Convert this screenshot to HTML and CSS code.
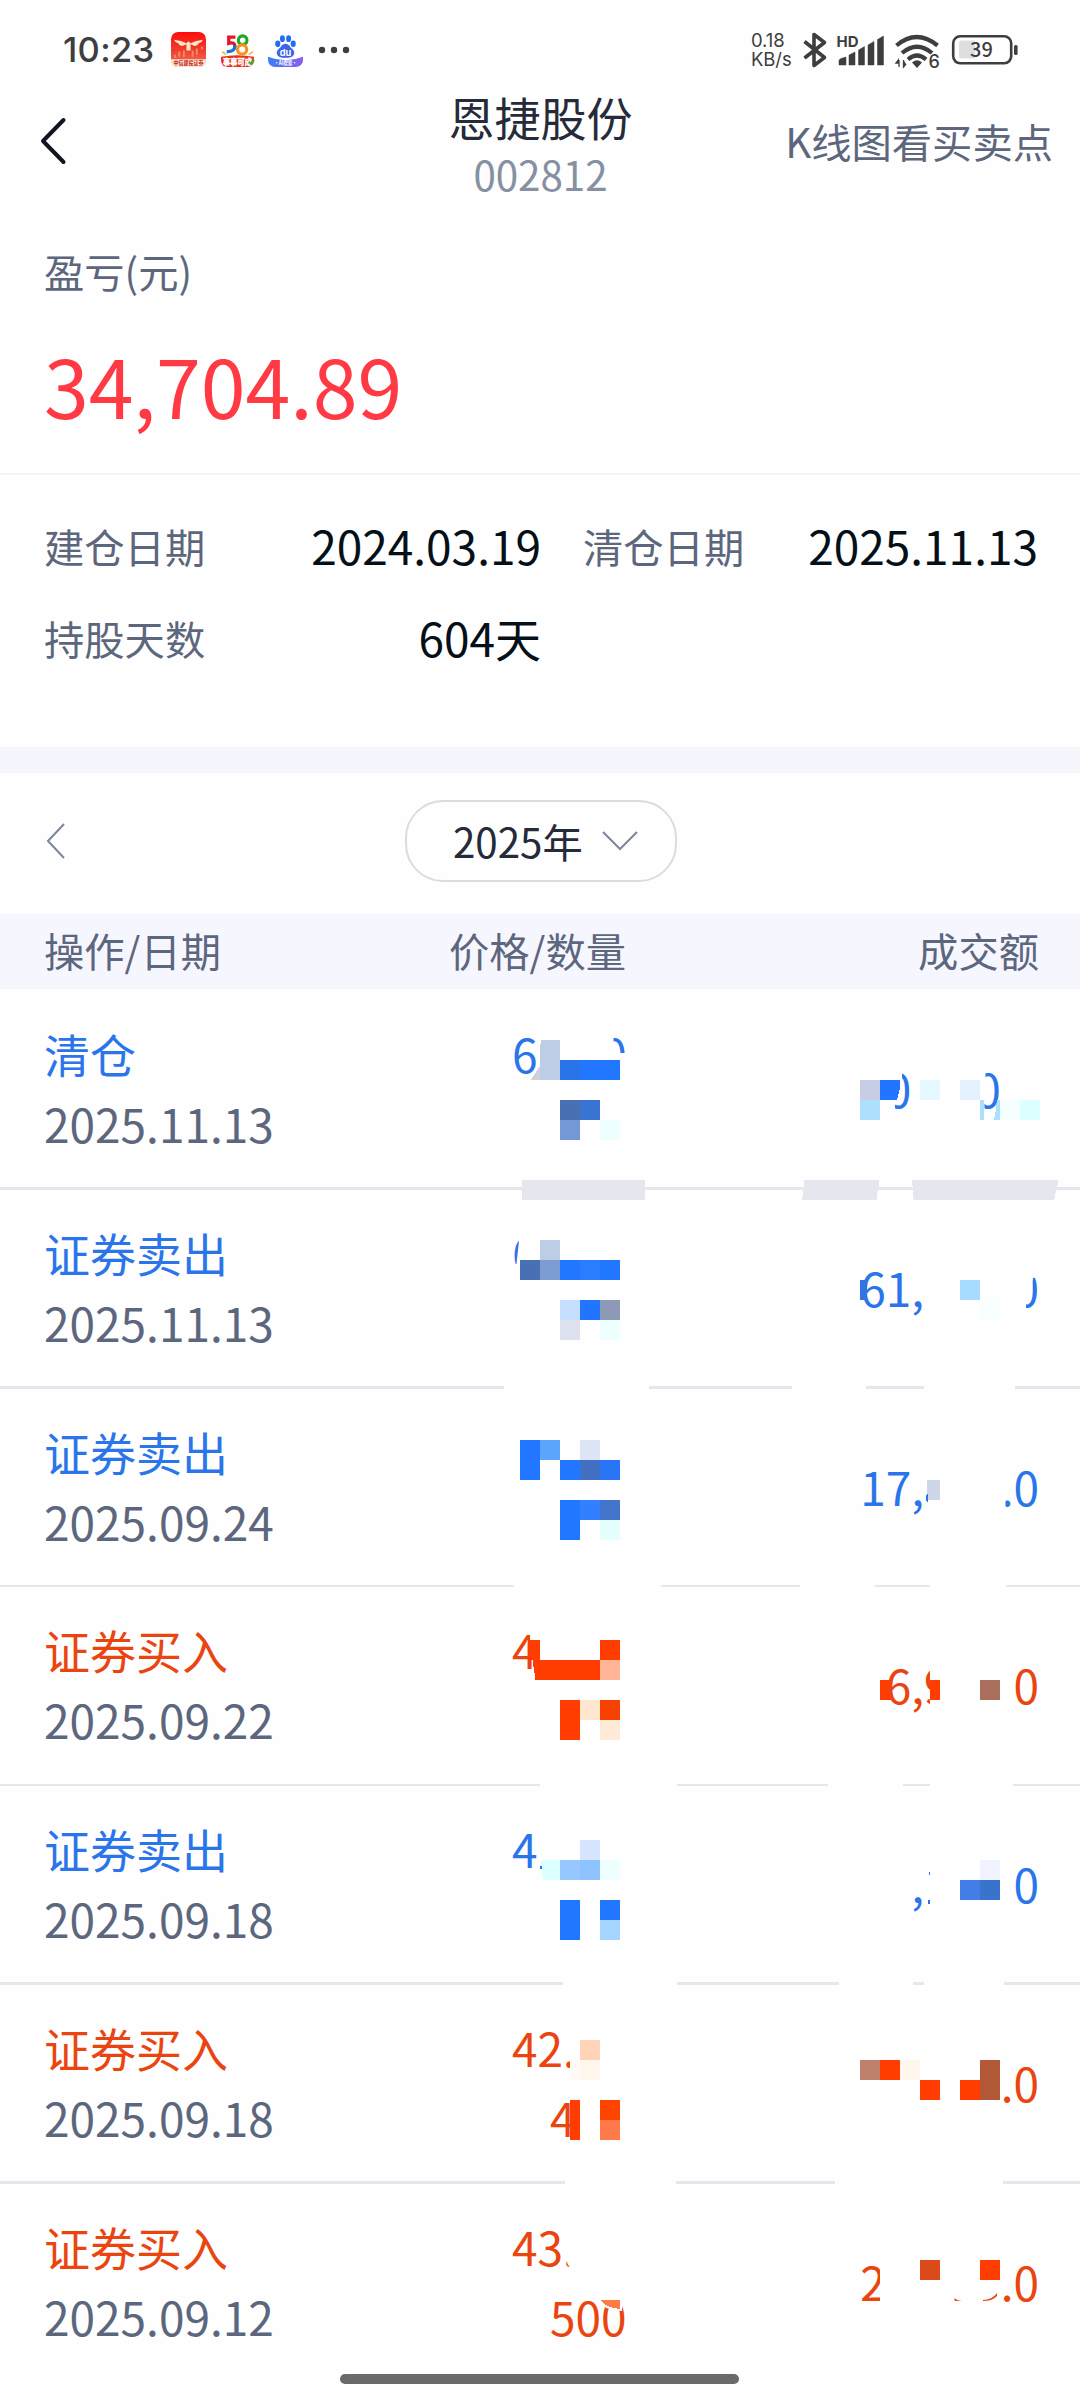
FILE: index.html
```html
<!DOCTYPE html>
<html lang="zh-CN">
<head>
<meta charset="utf-8">
<title>恩捷股份 002812</title>
<link rel="stylesheet" href="styles.css">
</head>
<body>
<div class="screen">
  <div class="status">
    <span class="clock">10:23</span>
    <svg class="app" viewBox="0 0 34 34">
      <defs><linearGradient id="red" x1="0" y1="0" x2="0" y2="1"><stop offset="0" stop-color="#fb0d0d"/><stop offset=".55" stop-color="#ee4130"/><stop offset="1" stop-color="#f07a5c"/></linearGradient></defs>
      <rect width="34" height="34" rx="7" fill="url(#red)"/>
      <path d="M0 26.500h34v1.500a6 6 0 0 1-6 6H6a6 6 0 0 1-6-6z" fill="#fbe3cf"/>
      <path d="M3 7.500q7 .5 12 3.500l2-2 2 2q5-3 12-3.500-1 3-4 3.500-1 2.500-4 2.500l-4-1.500v6h-4v-6l-4 1.500q-3 0-4-2.500-3-.5-4-3.500z" fill="#ffe7c2"/>
      <path d="M4 22v3M8 19v5M12.500 18v6M21 18v6M25 16v6M30 14v3" stroke="#f58a6c" stroke-width="1.800"/>
      <text x="17" y="32" class="app-text" fill="#c3271b" textLength="29" lengthAdjust="spacingAndGlyphs">中信建投证券</text>
    </svg>
    <svg class="app" viewBox="0 0 34 34">
      <path d="M1 24q16-3 32 0v4a6 6 0 0 1-6 6H7a6 6 0 0 1-6-6z" fill="#e8321a"/>
      <path d="M15 5H8.500v6q6-1.500 6 3" fill="none" stroke="#e5162b" stroke-width="3.200"/>
      <path d="M14.500 13q0 6.500-8 6" fill="none" stroke="#1476d8" stroke-width="3.200"/>
      <circle cx="22" cy="8" r="4.200" fill="none" stroke="#22a626" stroke-width="3"/>
      <circle cx="21.500" cy="17" r="4.500" fill="none" stroke="#f5921b" stroke-width="3"/>
      <path d="M2 19l4 3M32 19l-4 3" stroke="#f6b63c" stroke-width="1.500"/>
      <text x="17" y="32" class="app-text big" fill="#fff" stroke="#fff" stroke-width=".4" textLength="28" lengthAdjust="spacingAndGlyphs">事事可成</text>
      <path d="M28 29l2 2 3-4" fill="none" stroke="#3fa535" stroke-width="2"/>
    </svg>
    <svg class="app" viewBox="0 0 34 34">
      <defs><linearGradient id="blue"><stop offset="0" stop-color="#3c7ef5"/><stop offset="1" stop-color="#8a5cf0"/></linearGradient></defs>
      <path d="M0 24q17 7 34 0v3a7 7 0 0 1-7 7H7a7 7 0 0 1-7-7z" fill="url(#blue)"/>
      <g fill="#1f6df2"><ellipse cx="9.500" cy="11.500" rx="2.500" ry="3.200"/><ellipse cx="14" cy="6.500" rx="2.400" ry="3.300"/><ellipse cx="20" cy="6.500" rx="2.400" ry="3.300"/><ellipse cx="24.500" cy="11.500" rx="2.500" ry="3.200"/></g>
      <path d="M17 11.500q3 0 5 3.500 4 3 3.500 6-1 4-5.500 4h-6q-4.500 0-5.500-4-.5-3 3.500-6 2-3.500 5-3.500z" fill="#3f63e8"/>
      <text x="17" y="23" class="app-text du" fill="#fff">du</text>
      <text x="17" y="32" class="app-text" fill="#fff" textLength="22" lengthAdjust="spacingAndGlyphs">·AI搜索·</text>
    </svg>
    <svg class="dots" viewBox="0 0 32 8"><g fill="#3e3e3e"><circle cx="4" cy="4" r="3.200"/><circle cx="16" cy="4" r="3.200"/><circle cx="28" cy="4" r="3.200"/></g></svg>
    <span class="speed">0.18<br>KB/s</span>
    <svg class="phone" viewBox="800 28 222 44">
      <path d="M804.500 41.500l20 16L814 65.500v-31l10.500 8L804.500 58" fill="none" stroke="#3e3e3e" stroke-width="3.600" stroke-linejoin="round"/>
      <text x="836.500" y="46.500" class="hd" textLength="22" lengthAdjust="spacingAndGlyphs">HD</text>
      <path d="M839 60l2-1.500 5-1.500v8h-7zM849 55l6-3v13h-6zM858.500 50l6-3.500V65h-6zM868 45l6-3.500V65h-6zM877.500 39.500l6-3.500v29h-6z" fill="#3e3e3e" stroke="#3e3e3e" stroke-width=".5"/>
      <g fill="none" stroke="#3e3e3e" stroke-width="4.200"><path d="M896.500 45.500q20-17 41 0"/><path d="M902 53q15-12.500 30 0"/><path d="M908 59.500q9-8 18 0"/></g>
      <path d="M913 62.500q4-3 8 0l-4 4.500zM898 60.500l-2 2.500h2.300v-3zM899 67v-7M903.500 60v7l2.500-3" fill="#3e3e3e" stroke="#3e3e3e" stroke-width="1.300"/>
      <text x="928.500" y="68" class="six">6</text>
      <rect x="953.200" y="36.300" width="58" height="27" rx="7" fill="none" stroke="#3e3e3e" stroke-width="2.600"/>
      <path d="M962 40.500h13v18h-13q-3 0-3-3v-12q0-3 3-3z" fill="#dedede"/>
      <rect x="1014" y="45" width="3.600" height="10" rx="1.500" fill="#3e3e3e"/>
      <text x="981.500" y="57" class="level">39</text>
    </svg>
  </div>

  <header class="nav">
    <svg class="back" viewBox="0 0 28 50"><path d="M24.500 4L4 25l20.500 21" fill="none" stroke="#10161f" stroke-width="4" stroke-linecap="round" stroke-linejoin="round"/></svg>
    <div class="heading"><h1>恩捷股份</h1><p>002812</p></div>
    <a class="kline">K线图看买卖点</a>
  </header>

  <section class="profit">
    <p class="label">盈亏(元)</p>
    <p class="total">34,704.89</p>
  </section>

  <dl class="facts">
    <div><dt>建仓日期</dt><dd>2024.03.19</dd></div>
    <div><dt>清仓日期</dt><dd>2025.11.13</dd></div>
    <div><dt>持股天数</dt><dd>604天</dd></div>
  </dl>

  <div class="year-bar">
    <svg class="prev" viewBox="0 0 20 38"><path d="M18 2L2 19l16 17" fill="none" stroke="#7c859b" stroke-width="2"/></svg>
    <button class="year">2025年<svg viewBox="0 0 36 20"><path d="M1 1l17 17L35 1" fill="none" stroke="#7c859b" stroke-width="2"/></svg></button>
  </div>

  <div class="cols head"><span>操作/日期</span><span>价格/数量</span><span>成交额</span></div>

  <div class="trades">
    <div class="cols trade sell">
      <div><b>清仓</b><time>2025.11.13</time></div>
      <div><span class="price">6<i class="d"></i><i class="p"></i><i class="d"></i>0</span></div>
      <div class="amount"><i class="d"></i>0<i class="p"></i><i class="d"></i><i class="d"></i>0<i class="p"></i><i class="d"></i></div>
    </div>
    <div class="cols trade sell">
      <div><b>证券卖出</b><time>2025.11.13</time></div>
      <div><span class="price">6</span></div>
      <div class="amount">61,<i class="d"></i><i class="d"></i><i class="d"></i><i class="p"></i>0</div>
    </div>
    <div class="cols trade sell thin">
      <div><b>证券卖出</b><time>2025.09.24</time></div>
      <div></div>
      <div class="amount">17,<i class="d"></i><i class="d"></i><i class="d"></i>.0</div>
    </div>
    <div class="cols trade buy thin">
      <div><b>证券买入</b><time>2025.09.22</time></div>
      <div><span class="price">4</span></div>
      <div class="amount">6,9<i class="d"></i><i class="d"></i><i class="p"></i>0</div>
    </div>
    <div class="cols trade sell">
      <div><b>证券卖出</b><time>2025.09.18</time></div>
      <div><span class="price">4</span></div>
      <div class="amount">,<i class="d"></i><i class="d"></i><i class="d"></i><i class="p"></i>0</div>
    </div>
    <div class="cols trade buy">
      <div><b>证券买入</b><time>2025.09.18</time></div>
      <div><span class="price">42.</span><span class="count">4</span></div>
      <div class="amount">.0</div>
    </div>
    <div class="cols trade buy last">
      <div><b>证券买入</b><time>2025.09.12</time></div>
      <div><span class="price">43.</span><span class="count">500</span></div>
      <div class="amount">2<i class="d"></i><i class="p"></i><i class="d"></i><i class="d"></i><i class="d"></i>.0</div>
    </div>

    <svg class="mosaic" viewBox="0 989 1080 1411" shape-rendering="crispEdges">
      <g fill="#fefefe">
        <path d="M503.700 1385h145.300v5h-145.300zM791.500 1385h74.500v5h-74.500zM923.500 1385h91v5h-91zM514.400 1584h146.600v4h-146.600zM800 1584h75v4h-75zM930 1584h76v4h-76zM540 1783h137v4h-137zM828 1783h74.500v4h-74.500zM930 1783h83v4h-83zM562.600 1981h114.400v5h-114.400zM839 1981h74v5h-74zM923.500 1981h80.500v5h-80.500zM565 2180h111v5h-111zM835 2180h168v5h-168z"/>
      </g>
      <g fill="#fefefe" shape-rendering="auto">
        <path d="M600 1030h13.500v12l5 4 1 7h12v30h-31.500z"/>
        <path d="M880 1070h22v10h1l1 12-6 12-3 1v8h-15zM972 1070h13.500v34h-1v10h-12.500z"/>
        <path d="M519.500 1236h30v54h-40v-26h7z"/>
        <path d="M1008 1265h32v12l-7 1-1 12-6 14v8l-18 2z"/>
        <path d="M999 1490h6.500v20h-6.500z"/>
        <path d="M530 1630h20v10h-20zM510 1670h30v12h-30zM930 1660h24v50h-24zM923 1693h7v5h-7z"/>
        <path d="M570 2055h15v20h-15zM570 2100h15v45h-15z"/>
        <path d="M566 2255h10v16h-3.500l-5-7zM880 2260h8v45h-8z"/>
        <path d="M599 2298h23v13l-9-1-7-2z"/>
      </g>
      <!-- 1 -->
      <path d="M541 1040h19v40h-20v-32z" fill="#becde6"/><path d="M540 1066v14h-9.500z" fill="#cfcfdd"/>
      <path d="M560 1060h20v20h-20z" fill="#2a74ea"/><path d="M580 1060h40v20h-40z" fill="#2277ff"/>
      <path d="M560 1100h20v20h-20z" fill="#4a70b4"/><path d="M580 1100h20v20h-20z" fill="#3a74d3"/><path d="M560 1120h20v20h-20z" fill="#7398d6"/><path d="M600 1120h20v20h-20z" fill="#edffff"/>
      <path d="M860 1080h20v20h-20z" fill="#c6cde5"/><path d="M880 1080h20v8l-3 12h-17z" fill="#2175ff"/><path d="M860 1100h20v20h-20z" fill="#addfff"/>
      <path d="M920 1080h20v20h-20z" fill="#e5f7ff"/><path d="M960 1080h20v20h-20z" fill="#e5f1ff"/>
      <path d="M980 1100h4v20h-4zM996 1109l1-9h3v20h-6z" fill="#addfff"/><path d="M1000 1100h20v20h-20z" fill="#f5ffff"/><path d="M1020 1100h20v20h-20z" fill="#dcffff"/>
      <path d="M522 1180h122.500v20H522zM804.500 1180h75l-3 20H802zM912 1180h146.600l-4.600 20H913.600z" fill="#e6e6ee"/>
      <!-- 2 -->
      <path d="M540 1240h20v20h-20z" fill="#becde6"/><path d="M520 1260h20v20h-20z" fill="#4a70b4"/><path d="M540 1260h20v20h-20z" fill="#7c9cd3"/><path d="M560 1260h20v20h-20zM600 1260h20v20h-20z" fill="#2177ff"/><path d="M580 1260h20v20h-20z" fill="#2a7dff"/>
      <path d="M560 1300h20v20h-20z" fill="#c6deff"/><path d="M580 1300h20v20h-20z" fill="#2175ff"/><path d="M600 1300h20v20h-20z" fill="#8d99b5"/><path d="M560 1320h20v20h-20z" fill="#dee1ee"/><path d="M600 1320h20v20h-20z" fill="#edffff"/>
      <path d="M860 1280h7v20h-7z" fill="#3474e1"/><path d="M960 1280h20v20h-20z" fill="#a5dcff"/><path d="M980 1300h20v20h-20z" fill="#f7ffff"/>
      <!-- 3 -->
      <path d="M520 1440h20v40h-20zM560 1460h20v20h-20z" fill="#2177ff"/><path d="M540 1440h20v20h-20z" fill="#5ba5ff"/><path d="M580 1440h20v20h-20z" fill="#dde6f7"/><path d="M580 1460h20v20h-20z" fill="#4270c3"/><path d="M600 1460h20v20h-20z" fill="#2a75f7"/>
      <path d="M560 1500h20v40h-20z" fill="#2177ff"/><path d="M580 1500h20v20h-20z" fill="#327fff"/><path d="M600 1500h20v20h-20z" fill="#4374ca"/><path d="M600 1520h20v20h-20z" fill="#e5ffff"/>
      <path d="M927 1480h13v20h-13z" fill="#cdd7e7"/><path d="M926 1495l2-2v9h-1l-1-3z" fill="#2a75ea"/>
      <!-- 4 -->
      <path d="M528 1640h12v20h60v20h-64.500l-3-20h-4.500zM600 1640h20v20h-20z" fill="#ff3d00"/><path d="M600 1660h20v20h-20z" fill="#ffb595"/>
      <path d="M560 1700h20v40h-20z" fill="#ff3d00"/><path d="M580 1700h20v20h-20z" fill="#ffe6ce"/><path d="M600 1700h20v20h-20z" fill="#f74100"/><path d="M600 1720h20v20h-20z" fill="#ffead8"/>
      <path d="M880 1680h11l-2 8 3 12h-12zM930 1680h10v20h-10z" fill="#ff3d00"/><path d="M980 1680h20v20h-20z" fill="#ab705d"/>
      <!-- 5 -->
      <path d="M580 1840h20v20h-20z" fill="#d6e5ff"/><path d="M541 1860h19v20h-17z" fill="#dcffff"/><path d="M560 1860h20v20h-20z" fill="#96c8ff"/><path d="M580 1860h20v20h-20z" fill="#8dc4ff"/><path d="M600 1860h20v20h-20z" fill="#edffff"/>
      <path d="M560 1900h20v40h-20zM600 1900h20v20h-20z" fill="#2177ff"/><path d="M600 1920h20v20h-20z" fill="#a5d6ff"/><path d="M540 1866h1.500v3h-1.500zM928 1900h2v4h-2zM929 1872h1v3h-1z" fill="#2a75ea"/>
      <path d="M980 1860h20v20h-20z" fill="#eef3ff"/><path d="M960 1880h20v20h-20z" fill="#427de8"/><path d="M980 1880h20v20h-20z" fill="#3874cc"/>
      <!-- 6 -->
      <path d="M580 2040h20v20h-20z" fill="#ffd3b8"/><path d="M570 2060h10v20h-10z" fill="#fffaf6"/><path d="M580 2060h20v20h-20z" fill="#fff6ee"/>
      <path d="M570 2100h10v40h-10z" fill="#ff3d00"/><path d="M600 2100h20v20h-20z" fill="#ff4400"/><path d="M600 2120h20v20h-20z" fill="#ff794a"/>
      <path d="M860 2060h20v20h-20z" fill="#bd806c"/><path d="M880 2060h20v20h-20zM920 2080h20v20h-20zM960 2080h20v20h-20z" fill="#ff3d00"/><path d="M900 2060h20v20h-20z" fill="#fff6ed"/><path d="M980 2060h20v40h-20z" fill="#b35836"/>
      <!-- 7 -->
      <path d="M600 2300h20v9l-7-1-7-3z" fill="#ff7b43"/><path d="M920 2260h20v20h-20z" fill="#dc4a19"/><path d="M980 2260h20v20h-20z" fill="#ff3d00"/>
      <path d="M954.500 2298q3 3 8 3h-8zM983 2300q9 0 14-7v3q-4 5-14 5z" fill="#e64a19" shape-rendering="auto"/>
    </svg>
  </div>
  <div class="home"></div>
</div>
</body>
</html>
```
FILE: styles.css
```css
* { box-sizing: border-box; }
body, h1, p, dl, dd { margin: 0; }
body {
  background: #fefefe;
  font-family: "Noto Sans CJK SC", sans-serif;
  font-size: 40.300px;
  color: #5c667d;
}
h1, b { font-weight: 400; }
svg { display: block; flex: none; }
.screen { position: relative; width: 1080px; height: 2400px; overflow: hidden; }

.status { display: flex; align-items: center; height: 87px; padding: 12px 58px 0 63px; }
.clock { width: 108px; font: 500 34.500px/44px Inter, sans-serif; letter-spacing: .3px; color: #3e3e3e; white-space: nowrap; }
.app { width: 35px; height: 35px; margin-right: 13.500px; overflow: visible; }
.app-text { font-size: 5.500px; font-weight: 700; text-anchor: middle; }
.app-text.big { font-size: 8px; }
.app-text.du { font: 700 9px Inter, sans-serif; }
.dots { width: 32px; height: 8px; margin-left: 1px; }
.speed { margin-left: auto; width: 49px; font: 400 18.500px/19px Inter, sans-serif; letter-spacing: -.1px; color: #3e3e3e; }
.phone { width: 222px; height: 44px; }
.hd { font: 700 15px Inter, sans-serif; fill: #3e3e3e; }
.six { font: 500 18px Inter, sans-serif; fill: #3e3e3e; }
.level { font: 500 20px "Noto Sans CJK SC", sans-serif; fill: #3e3e3e; text-anchor: middle; }

.nav { display: grid; grid-template-columns: 289px 1fr 300px; align-items: center; height: 116px; padding: 0 27px 0 39px; }
.back { width: 28px; height: 50px; margin-bottom: 8px; }
.heading { text-align: center; }
.heading h1 { font-size: 46px; line-height: 58px; color: #252b38; }
.heading p { line-height: 58px; color: #8590a3; }
.kline { margin-bottom: 8px; line-height: 58px; text-align: right; white-space: nowrap; }

.profit { height: 272px; padding: 38px 44px 0; border-bottom: 2px solid #f5f5f6; }
.label { line-height: 60px; }
.total { margin-top: 33px; font-size: 80.700px; line-height: 100px; color: #ff3a45; }

.facts { display: grid; grid-template-columns: 497px 1fr; column-gap: 42px; align-content: start; height: 272px; padding: 25px 42px 0 44px; }
.facts div { display: flex; justify-content: space-between; height: 91.500px; line-height: 91.500px; }
.facts dd { font-size: 46px; color: #050f18; }

.year-bar { display: grid; grid-template-columns: 359px 1fr; align-items: center; height: 167px; padding: 0 43px 5px 46px; border-top: 26px solid #f6f6ff; }
.prev { width: 20px; height: 38px; }
.year { display: flex; align-items: center; gap: 19px; width: 272px; height: 82px; padding: 0 0 0 46px; border: 2px solid #dcdcdc; border-radius: 38px; background: none; font: 400 40.300px/60px "Noto Sans CJK SC", sans-serif; color: #252b38; }
.year svg { width: 36px; height: 20px; }

.cols { display: grid; grid-template-columns: 384px 200px 1fr; padding: 0 41px 0 43px; }
.cols > :nth-child(n+2) { text-align: right; }
.head { height: 75px; line-height: 71px; padding-left: 44px; grid-template-columns: 382px 200px 1fr; background: #f6f6ff; }
.trades { position: relative; display: grid; grid-template-rows: 201px 199px 198px 199px 199px 199px 216px; }
.trade { padding-top: 27px; border-bottom: 3px solid #e6e6ee; font-size: 46px; line-height: 70px; }
.trade:first-child { padding-top: 29px; }
.trade.thin { border-bottom-width: 2px; }
.trade.last { border: 0; }
.trade b, .trade time { display: block; margin-left: 1px; }
.trade time { color: #5c667d; }
.sell { color: #2a75ea; }
.buy { color: #ea4510; }
.price, .count { display: block; margin-left: auto; text-align: left; white-space: nowrap; }
.price { width: 115px; }
.count { width: 77px; }
.amount { line-height: 140px; white-space: nowrap; }
.d, .p { display: inline-block; width: .555em; }
.p { width: .278em; }
.mosaic { position: absolute; left: 0; top: 0; width: 1080px; height: 1411px; }
.home { position: absolute; left: 340px; top: 2374px; width: 399px; height: 10px; border-radius: 5px; background: #6b696c; }
```
